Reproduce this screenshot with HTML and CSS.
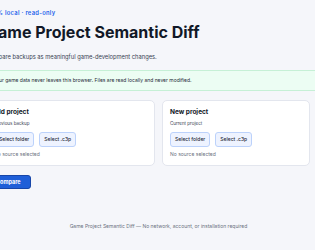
FILE: index.html
```html
<!DOCTYPE html>
<html lang="en">
  <head>
    <meta charset="UTF-8" />
    <meta name="viewport" content="width=device-width, initial-scale=1.0" />
    <title>Game Project Semantic Diff</title>
    <link rel="stylesheet" href="styles.css">
  </head>
  <body>
    <div class="page">
      <div class="badge">100% local · read-only</div>
      <h1>Game Project Semantic Diff</h1>
      <p class="lead">Compare backups as meaningful game-development changes.</p>

      <div class="notice">
        Your game data never leaves this browser. Files are read locally and never modified.
      </div>

      <div class="sources">
        <div class="card">
          <h2>Old project</h2>
          <p class="hint">Previous backup</p>
          <div class="actions">
            <button class="btn-pick">Select folder</button>
            <button class="btn-pick">Select .c3p</button>
          </div>
          <p class="source-status">No source selected</p>
        </div>

        <div class="card">
          <h2>New project</h2>
          <p class="hint">Current project</p>
          <div class="actions">
            <button class="btn-pick">Select folder</button>
            <button class="btn-pick">Select .c3p</button>
          </div>
          <p class="source-status">No source selected</p>
        </div>
      </div>

      <button class="btn-compare">Compare</button>

      <footer class="footer">
        Game Project Semantic Diff — No network, account, or installation required
      </footer>
    </div>
  </body>
</html>
```

FILE: styles.css
```css
* {
  margin: 0;
  padding: 0;
  box-sizing: border-box;
}

body {
  font-family: Inter, "Noto Sans", sans-serif;
  background: #f5f6fa;
  color: #111827;
  overflow: hidden;
}

.page {
  width: 345px;
  margin-left: -14px;
  padding-top: 9px;
}

.badge {
  font-size: 5.8px;
  line-height: 8px;
  font-weight: 600;
  letter-spacing: 0.3px;
  color: #2563eb;
}

h1 {
  margin-top: 6px;
  font-size: 16px;
  line-height: 19px;
  font-weight: 700;
  color: #111827;
}

.lead {
  margin-top: 10.7px;
  font-size: 5.75px;
  line-height: 8px;
  color: #374151;
}

.notice {
  margin-top: 9.3px;
  padding: 5.5px 6px;
  font-size: 5px;
  line-height: 8px;
  color: #1f2937;
  background: #ecfdf3;
  border: 1px solid #c6f0d6;
  border-radius: 3px;
}

.sources {
  display: grid;
  grid-template-columns: 169px 148px;
  gap: 7px;
  margin-top: 9px;
}

.card {
  background: white;
  border: 1px solid #e3e6ee;
  border-radius: 5px;
  padding: 7px;
}

.card h2 {
  font-size: 6.5px;
  line-height: 9px;
  font-weight: 700;
  color: #111827;
}

.hint {
  margin-top: 3.5px;
  font-size: 4.5px;
  line-height: 7px;
  color: #374151;
}

.actions {
  display: flex;
  gap: 5px;
  margin-top: 4.5px;
}

.btn-pick {
  font-family: inherit;
  font-size: 5px;
  line-height: 7px;
  font-weight: 500;
  color: #1f2937;
  background: #eef3ff;
  border: 1px solid #bcd2fb;
  border-radius: 3px;
  padding: 3px 4px;
}

.source-status {
  margin-top: 4.5px;
  font-size: 5px;
  line-height: 7px;
  color: #6b7280;
}

.btn-compare {
  display: block;
  margin-top: 9px;
  font-family: inherit;
  font-size: 5.5px;
  line-height: 8px;
  font-weight: 700;
  color: white;
  background: #1f5fd8;
  border: 1px solid #1746a8;
  border-radius: 3px;
  padding: 2px 9px;
}

.footer {
  margin-top: 34px;
  text-align: center;
  font-size: 5px;
  line-height: 7px;
  color: #6b7280;
}
```
